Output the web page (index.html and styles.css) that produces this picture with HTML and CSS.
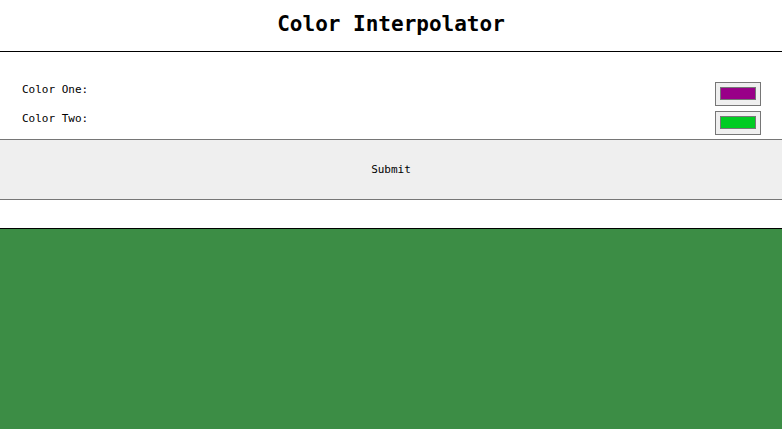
FILE: index.html
```html
<!DOCTYPE html>
<html>
<head>
<meta charset="utf-8">
<title>Color Interpolator</title>
<link rel="stylesheet" href="styles.css">
</head>
<body>
<header class="header">
  <h1 class="title">Color Interpolator</h1>
</header>
<form class="form">
  <div class="fields">
    <div class="row">
      <label class="label" for="c1">Color One:</label>
      <input class="picker" id="c1" type="color" value="#990088">
    </div>
    <div class="row">
      <label class="label" for="c2">Color Two:</label>
      <input class="picker" id="c2" type="color" value="#00cc22">
    </div>
  </div>
  <button class="submit" type="button">Submit</button>
</form>
<div class="result"></div>
</body>
</html>
```
FILE: styles.css
```css
html, body {
  margin: 0;
  padding: 0;
  background: #ffffff;
  height: 100%;
}
body {
  font-family: "DejaVu Sans Mono", "Liberation Mono", monospace;
  color: #000;
  display: flex;
  flex-direction: column;
}
.header {
  height: 51px;
  border-bottom: 1px solid #000;
  display: flex;
  align-items: center;
  justify-content: center;
}
.title {
  margin: 0;
  font-size: 21px;
  font-weight: bold;
  line-height: 24px;
  padding-bottom: 4px;
}
.form {
  display: flex;
  flex-direction: column;
  margin: 0 0 28px 0;
}
.fields {
  display: flex;
  flex-direction: column;
  gap: 5px;
  padding: 30px 21px 4px 22px;
}
.row {
  display: flex;
  justify-content: space-between;
  align-items: flex-start;
  height: 24px;
}
.label {
  font-size: 11px;
  line-height: 14px;
  padding-top: 1px;
}
.picker {
  -webkit-appearance: none;
  appearance: none;
  box-sizing: border-box;
  width: 46px;
  height: 24px;
  padding: 0;
  margin: 0;
  border: 1px solid #767676;
  background: #efefef;
}
.picker::-webkit-color-swatch-wrapper {
  padding: 4px 4px 5px 4px;
}
.picker::-webkit-color-swatch {
  border: 1px solid #777;
}
.submit {
  display: block;
  width: 100%;
  height: 61px;
  margin: 0;
  padding: 0;
  border: none;
  border-top: 1px solid #767676;
  border-bottom: 1px solid #767676;
  background: #efefef;
  font-family: "DejaVu Sans Mono", "Liberation Mono", monospace;
  font-size: 11px;
  color: #000;
}
.result {
  flex: 1;
  border-top: 1px solid #000;
  background: #3c8d45;
}
```
